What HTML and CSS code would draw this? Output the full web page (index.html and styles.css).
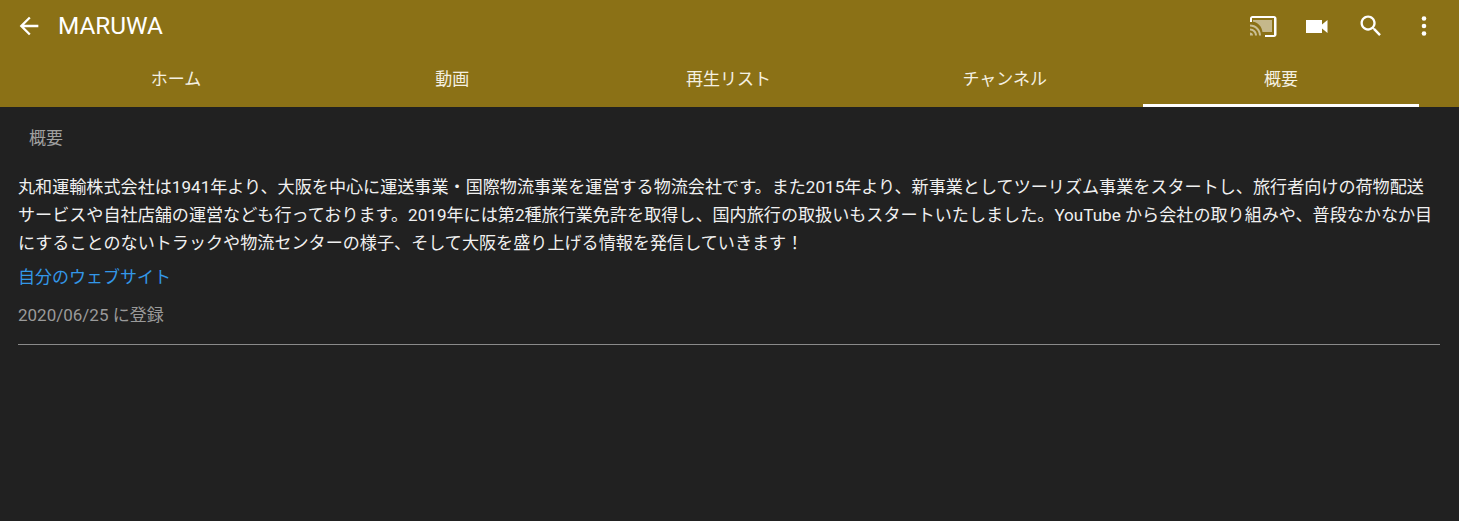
FILE: index.html
```html
<!DOCTYPE html>
<html lang="ja">
<head>
<meta charset="utf-8">
<title>MARUWA</title>
<link rel="stylesheet" href="styles.css">
</head>
<body>
<header class="appbar">
  <div class="toolbar">
    <svg class="back" viewBox="0 0 24 24" width="28" height="28"><path fill="#fff" d="M20 11H7.830l5.590-5.590L12 4l-8 8 8 8 1.410-1.410L7.830 13H20v-2z"/></svg>
    <h1 class="title">MARUWA</h1>
    <div class="actions">
      <svg class="icon" viewBox="0 0 28 24" width="28" height="24"><path fill="#fff" fill-opacity=".5" d="M4 6h19v12h-9.500c-.7-5.700-4.800-9.700-9.500-10.200z"/><path fill="#fff" fill-opacity=".55" d="M1 18.500v3h3c0-1.700-1.300-3-3-3zm0-4v2c2.800 0 5 2.200 5 5h2c0-3.900-3.100-7-7-7zm0-4v2c5 0 9 4 9 9h2c0-6.100-4.900-11-11-11z"/><path fill="#fff" d="M25 2H3.500C2.100 2 1 3.100 1 4.500V8h2V4h22v17h-9v2h9c1.400 0 2.500-1.100 2.500-2.500v-16C27.500 3.100 26.400 2 25 2z"/></svg>
      <svg class="icon" viewBox="0 0 24 24" width="24" height="24"><path fill="#fff" d="M17 10.500V6H1v13h16v-4.500l5.500 4.500V6z"/></svg>
      <svg class="icon" viewBox="0 0 24 24" width="28" height="28"><path fill="#fff" d="M15.500 14h-.79l-.28-.27C15.410 12.590 16 11.110 16 9.500 16 5.910 13.090 3 9.500 3S3 5.910 3 9.500 5.910 16 9.500 16c1.610 0 3.090-.59 4.230-1.570l.27.28v.79l5 4.990L20.490 19l-4.990-5zm-6 0C7.010 14 5 11.990 5 9.500S7.010 5 9.500 5 14 7.010 14 9.500 11.990 14 9.500 14z"/></svg>
      <svg class="icon icon-more" viewBox="0 0 24 24" width="24" height="24"><circle fill="#fff" cx="12" cy="4.500" r="2.300"/><circle fill="#fff" cx="12" cy="12" r="2.300"/><circle fill="#fff" cx="12" cy="19.500" r="2.300"/></svg>
    </div>
  </div>
  <nav class="tabs">
    <a class="tab">ホーム</a>
    <a class="tab">動画</a>
    <a class="tab">再生リスト</a>
    <a class="tab">チャンネル</a>
    <a class="tab active">概要</a>
  </nav>
</header>
<main class="about">
  <h2 class="heading">概要</h2>
  <p class="desc">丸和運輸株式会社は1941年より、大阪を中心に運送事業・国際物流事業を運営する物流会社です。また2015年より、新事業としてツーリズム事業をスタートし、旅行者向けの荷物配送サービスや自社店舗の運営なども行っております。2019年には第2種旅行業免許を取得し、国内旅行の取扱いもスタートいたしました。YouTube から会社の取り組みや、普段なかなか目にすることのないトラックや物流センターの様子、そして大阪を盛り上げる情報を発信していきます！</p>
  <a class="link">自分のウェブサイト</a>
  <p class="joined">2020/06/25 に登録</p>
  <hr class="rule">
</main>
</body>
</html>
```
FILE: styles.css
```css
* { box-sizing: border-box; }
html, body { margin: 0; height: 100%; }
body {
  background: #212121;
  color: #fff;
  font-family: Roboto, "Noto Sans CJK JP", sans-serif;
  overflow: hidden;
}
.appbar { background: #8b7116; height: 107px; display: flex; flex-direction: column; }
.toolbar { height: 52px; display: flex; align-items: center; padding: 0 23px 0 15px; }
.back { flex: none; }
.title { margin: 0 0 0 15px; font-size: 24.300px; font-weight: 400; line-height: 28px; }
.actions { margin-left: auto; display: flex; align-items: center; gap: 28px; }
.icon-more { margin-left: -1px; }
.tabs { display: flex; margin: 0 40px 0 38px; flex: 1; }
.tab { flex: 1; display: flex; align-items: center; justify-content: center; font-size: 17px; padding-bottom: 1px; border-bottom: 3px solid transparent; color: #f4f0e2; }
.tab.active { border-bottom-color: #fff; }
.about { padding: 0 19px 0 18px; }
.heading { margin: 0; padding: 20px 0 0 11px; font-size: 17px; font-weight: 400; line-height: 22px; color: #a0a0a0; }
.desc { margin: 25px 0 0; font-size: 17.100px; line-height: 27.800px; color: #f0f0f0; }
.link { display: block; margin-top: 8px; font-size: 17px; line-height: 24px; color: #3397e8; }
.joined { margin: 14px 0 0; font-size: 17px; line-height: 24px; color: #9a9a9a; }
.rule { margin: 17px 0 0; border: 0; height: 1px; background: #8a8a8a; }
```
